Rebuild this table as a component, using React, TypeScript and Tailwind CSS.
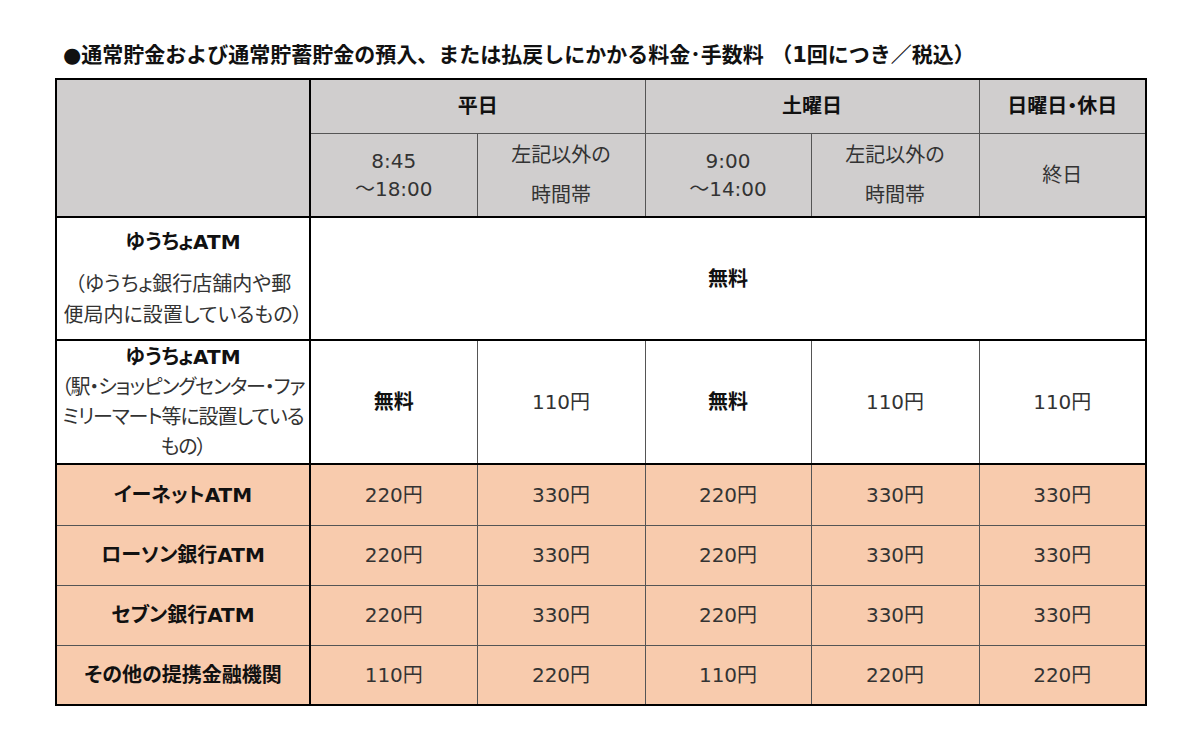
import React from "react";

const font = { fontFamily: '"DejaVu Sans", "Noto Sans CJK JP", sans-serif' };

const thin = "border border-[#555]";
const head = "bg-[#d0cece] text-center align-middle";
const peach = "bg-[#f8cbad] text-center align-middle";

type FeeRow = { name: string; fees: string[] };

const partnerRows: FeeRow[] = [
  { name: "イーネットATM", fees: ["220円", "330円", "220円", "330円", "330円"] },
  { name: "ローソン銀行ATM", fees: ["220円", "330円", "220円", "330円", "330円"] },
  { name: "セブン銀行ATM", fees: ["220円", "330円", "220円", "330円", "330円"] },
  { name: "その他の提携金融機関", fees: ["110円", "220円", "110円", "220円", "220円"] },
];

export default function App() {
  return (
    <div className="w-[1200px] h-[735px] bg-white text-[#333]" style={font}>
      <div className="pt-[41px] pl-[55px]">
        {/* Title */}
        <h1 className="pl-[8px] text-[21px] font-bold leading-[28px] text-[#111]">
          ●通常貯金および通常貯蓄貯金の預入、または払戻しにかかる料金･手数料 （1回につき／税込）
        </h1>

        <table className="mt-[9px] table-fixed border-collapse border-2 border-black text-[20px] [font-feature-settings:'palt']">
          <colgroup>
            <col className="w-[254px]" />
            <col className="w-[167px]" />
            <col className="w-[168px]" />
            <col className="w-[166px]" />
            <col className="w-[168px]" />
            <col className="w-[167px]" />
          </colgroup>
          <thead>
            <tr className="h-[54px]">
              <th rowSpan={2} className={`${head} border-2 border-black`} />
              <th colSpan={2} className={`${head} ${thin} border-t-2 border-t-black border-l-2 border-l-black font-bold text-[#111]`}>
                平日
              </th>
              <th colSpan={2} className={`${head} ${thin} border-t-2 border-t-black font-bold text-[#111]`}>
                土曜日
              </th>
              <th className={`${head} ${thin} border-t-2 border-t-black border-r-2 border-r-black font-bold text-[#111]`}>
                日曜日・休日
              </th>
            </tr>
            <tr className="h-[84px]">
              <td className={`${head} ${thin} border-b-2 border-b-black border-l-2 border-l-black leading-[28px]`}>
                <div>8:45</div>
                <div>～18:00</div>
              </td>
              <td className={`${head} ${thin} border-b-2 border-b-black leading-[40px]`}>
                <div>左記以外の</div>
                <div>時間帯</div>
              </td>
              <td className={`${head} ${thin} border-b-2 border-b-black leading-[28px]`}>
                <div>9:00</div>
                <div>～14:00</div>
              </td>
              <td className={`${head} ${thin} border-b-2 border-b-black leading-[40px]`}>
                <div>左記以外の</div>
                <div>時間帯</div>
              </td>
              <td className={`${head} ${thin} border-b-2 border-b-black border-r-2 border-r-black`}>
                終日
              </td>
            </tr>
          </thead>
          <tbody>
            <tr className="h-[123px]">
              <td className="border-2 border-black bg-white text-center align-middle whitespace-nowrap">
                <div className="font-bold text-[#111] leading-[30px]">ゆうちょATM</div>
                <div className="mt-[12px] leading-[31px]">
                  （ゆうちょ銀行店舗内や郵
                  <br />
                  便局内に設置しているもの）
                </div>
              </td>
              <td colSpan={5} className="border-2 border-black bg-white text-center align-middle font-bold text-[#111]">
                無料
              </td>
            </tr>
            <tr className="h-[124px]">
              <td className="border-2 border-black bg-white text-center align-middle leading-[30px] whitespace-nowrap">
                <div className="font-bold text-[#111]">ゆうちょATM</div>
                <div className="tracking-[-1.1px]">
                  （駅・ショッピングセンター・ファ
                  <br />
                  ミリーマート等に設置している
                  <br />
                  もの）
                </div>
              </td>
              <td className={`${thin} border-b-2 border-b-black bg-white text-center align-middle font-bold text-[#111]`}>無料</td>
              <td className={`${thin} border-b-2 border-b-black bg-white text-center align-middle`}>110円</td>
              <td className={`${thin} border-b-2 border-b-black bg-white text-center align-middle font-bold text-[#111]`}>無料</td>
              <td className={`${thin} border-b-2 border-b-black bg-white text-center align-middle`}>110円</td>
              <td className={`${thin} border-b-2 border-b-black border-r-2 border-r-black bg-white text-center align-middle`}>110円</td>
            </tr>
            {partnerRows.map((row, i) => (
              <tr key={row.name} className={i === 0 ? "h-[61px]" : "h-[60px]"}>
                <td className={`${peach} ${thin} border-r-2 border-r-black border-l-2 border-l-black font-bold text-[#111]`}>
                  {row.name}
                </td>
                {row.fees.map((fee, j) => (
                  <td key={j} className={`${peach} ${thin}`}>
                    {fee}
                  </td>
                ))}
              </tr>
            ))}
          </tbody>
        </table>
      </div>
    </div>
  );
}
